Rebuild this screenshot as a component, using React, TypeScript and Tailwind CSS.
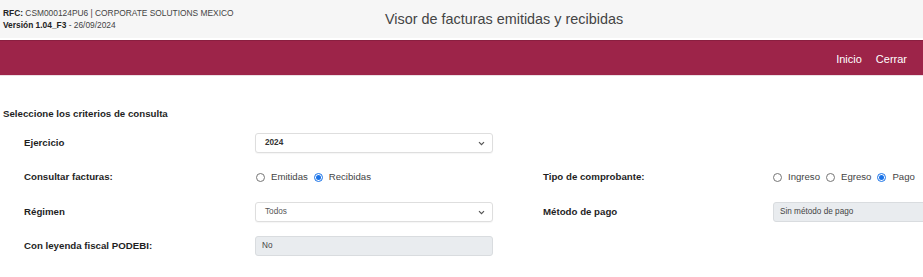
import React from "react";

function Radio({ checked }: { checked?: boolean }) {
  return checked ? (
    <span className="shrink-0 inline-flex w-[9px] h-[9px] rounded-full border border-[#1a73e8] bg-white items-center justify-center">
      <span className="w-[5px] h-[5px] rounded-full bg-[#1a73e8]" />
    </span>
  ) : (
    <span className="shrink-0 inline-block w-[9px] h-[9px] rounded-full border border-[#767676] bg-white" />
  );
}

function Chevron() {
  return (
    <svg width="7" height="5" viewBox="0 0 7 5" className="text-[#555] shrink-0">
      <path d="M1 1.2 L3.5 3.7 L6 1.2" fill="none" stroke="currentColor" strokeWidth="1.2" />
    </svg>
  );
}

function SelectBox({ value, bold }: { value: string; bold?: boolean }) {
  return (
    <div className="shrink-0 w-[238px] h-[20px] bg-white border border-[#dedede] rounded-[3px] shadow-[0_1px_1px_rgba(0,0,0,0.04)] flex items-center justify-between pl-[9px] pr-[7px]">
      <span className={`text-[8.2px] leading-[10px] ${bold ? "font-bold text-[#333]" : "text-[#555]"}`}>{value}</span>
      <Chevron />
    </div>
  );
}

function GrayBox({ value, width = 238 }: { value: string; width?: number }) {
  return (
    <div
      className="h-[20px] bg-[#e9ecef] border border-[#d9dcdf] rounded-[3px] flex items-center pl-[6px] shrink-0"
      style={{ width }}
    >
      <span className="text-[8.2px] leading-[10px] text-[#444]">{value}</span>
    </div>
  );
}

function Label({ children }: { children: React.ReactNode }) {
  return <div className="text-[9.7px] font-bold text-[#1f1f1f] whitespace-nowrap">{children}</div>;
}

export default function App() {
  return (
    <div
      className="w-[923px] h-[277px] overflow-hidden bg-white"
      style={{ fontFamily: '"Liberation Sans", Arial, sans-serif' }}
    >
      {/* Top header */}
      <div className="h-[40px] bg-[#f6f6f6] border-b-[2px] border-white flex">
        <div className="w-[385px] shrink-0 pl-[3px] pt-[7px] text-[8.4px] leading-[12px] text-[#444]">
          <div>
            <span className="font-bold text-[#222]">RFC:</span> CSM000124PU6 | CORPORATE SOLUTIONS MEXICO
          </div>
          <div>
            <span className="font-bold text-[#222]">Versión 1.04_F3</span> - 26/09/2024
          </div>
        </div>
        <div className="pt-[10px] text-[14.4px] leading-[18px] text-[#444] whitespace-nowrap">
          Visor de facturas emitidas y recibidas
        </div>
      </div>

      {/* Maroon nav bar */}
      <div className="h-[35px] bg-[#9d2449] border-t border-[#8a1f40] flex items-center justify-end pr-[16px] gap-[14px] pt-[2px]">
        <span className="text-[11px] text-white">Inicio</span>
        <span className="text-[11px] text-white">Cerrar</span>
      </div>
      <div className="h-[1px] bg-[#ecdfe3]" />

      {/* Content */}
      <div className="pt-[32px] pl-[3px] text-[9.7px] font-bold text-[#1f1f1f] leading-[12px]">
        Seleccione los criterios de consulta
      </div>

      <div className="pt-[6px] pl-[24px]">
        {/* Row 1 */}
        <div className="h-[34px] flex items-center">
          <div className="w-[231px] shrink-0"><Label>Ejercicio</Label></div>
          <SelectBox value="2024" bold />
        </div>
        {/* Row 2 */}
        <div className="h-[35px] flex items-center">
          <div className="w-[231px] shrink-0"><Label>Consultar facturas:</Label></div>
          <div className="w-[238px] shrink-0 flex items-center text-[9.6px] text-[#444] pl-[1px]">
            <Radio />
            <span className="ml-[6px] mr-[6px]">Emitidas</span>
            <Radio checked />
            <span className="ml-[6px]">Recibidas</span>
          </div>
          <div className="w-[50px] shrink-0" />
          <div className="w-[230px] shrink-0"><Label>Tipo de comprobante:</Label></div>
          <div className="flex items-center text-[9.6px] text-[#444] whitespace-nowrap shrink-0">
            <Radio />
            <span className="ml-[6px] mr-[6px]">Ingreso</span>
            <Radio />
            <span className="ml-[6px] mr-[6px]">Egreso</span>
            <Radio checked />
            <span className="ml-[6px]">Pago</span>
          </div>
        </div>
        {/* Row 3 */}
        <div className="h-[34px] flex items-center">
          <div className="w-[231px] shrink-0"><Label>Régimen</Label></div>
          <SelectBox value="Todos" />
          <div className="w-[50px] shrink-0" />
          <div className="w-[230px] shrink-0"><Label>Método de pago</Label></div>
          <GrayBox value="Sin método de pago" width={238} />
        </div>
        {/* Row 4 */}
        <div className="h-[34px] flex items-center">
          <div className="w-[231px] shrink-0"><Label>Con leyenda fiscal PODEBI:</Label></div>
          <GrayBox value="No" />
        </div>
      </div>
    </div>
  );
}
